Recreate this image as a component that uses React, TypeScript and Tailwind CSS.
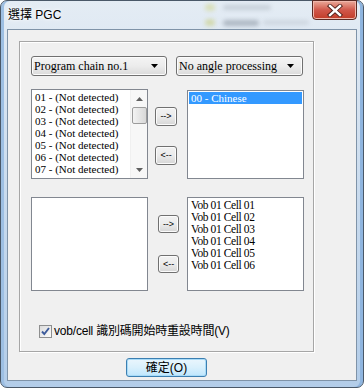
import React from "react";

const serif = "font-['Liberation_Serif','Noto_Sans_CJK_TC',serif]";
const sans = "font-['Liberation_Sans','Noto_Sans_CJK_TC',sans-serif]";

const chains = Array.from({ length: 8 }, (_, i) => `0${i + 1} - (Not detected)`);
const cells = Array.from({ length: 6 }, (_, i) => `Vob 01 Cell 0${i + 1}`);

function Combo({ label, width }: { label: string; width: string }) {
  return (
    <div
      className={`${width} h-[20px] flex items-center justify-between rounded-[3px] border border-[#707070] bg-gradient-to-b from-[#f4f4f4] via-[#ececec] to-[#dadada] pl-[2px] pr-[8px] shadow-[inset_0_0_0_1px_#fcfcfc]`}
    >
      <span className={`${serif} text-[12px] leading-[14px] text-black`}>{label}</span>
      <svg width="7" height="4" viewBox="0 0 7 4">
        <path d="M0 0h7L3.5 4z" fill="#000" />
      </svg>
    </div>
  );
}

function SmallButton({ label, w, h }: { label: string; w: string; h: string }) {
  return (
    <div
      className={`${w} ${h} flex items-center justify-center rounded-[3px] border border-[#707070] bg-gradient-to-b from-[#f2f2f2] via-[#ebebeb] to-[#d6d6d6] shadow-[inset_0_0_0_1px_#fbfbfb] ${sans} text-[9px] leading-none text-black`}
    >
      {label}
    </div>
  );
}

function ArrowButtons({ w, h, top, gap }: { w: string; h: string; top: string; gap: string }) {
  return (
    <div className={`flex flex-col ${top} ${gap}`}>
      <SmallButton label="-->" w={w} h={h} />
      <SmallButton label="<--" w={w} h={h} />
    </div>
  );
}

function ScrollBar() {
  return (
    <div className="w-[17px] h-full flex flex-col items-center bg-[#f7f7f7] border-l border-[#f0f0f0]">
      <div className="h-[17px] w-full flex items-center justify-center">
        <svg width="7" height="4" viewBox="0 0 7 4">
          <path d="M0 4h7L3.5 0z" fill="#606060" />
        </svg>
      </div>
      <div className="w-[15px] h-[17px] rounded-[2px] border border-[#9c9c9c] bg-gradient-to-r from-[#f3f3f3] to-[#d8d8d8]" />
      <div className="flex-1" />
      <div className="h-[17px] w-full flex items-center justify-center">
        <svg width="7" height="4" viewBox="0 0 7 4">
          <path d="M0 0h7L3.5 4z" fill="#606060" />
        </svg>
      </div>
    </div>
  );
}

export default function App() {
  return (
    <div className="w-[364px] h-[388px] overflow-hidden bg-white">
      <div className="relative w-[364px] h-[388px] rounded-[7px] border border-[#4a5868] bg-gradient-to-b from-[#e4ecf4] via-[#c9dbee] to-[#b3cde9] shadow-[inset_3px_0_0_#9dbfe3,inset_-3px_0_0_#8fb5df]">
        {/* blurred desktop behind the glass */}
        <div className="absolute left-[204px] top-[3px] w-[10px] h-[7px] rounded-full bg-[#d4d99e] blur-[2px] opacity-70" />
        <div className="absolute left-[222px] top-[4px] w-[48px] h-[5px] rounded bg-[#b4bdc7] blur-[2px] opacity-60" />
        <div className="absolute left-[204px] top-[18px] w-[10px] h-[7px] rounded-full bg-[#ccd290] blur-[2px] opacity-70" />
        <div className="absolute left-[222px] top-[19px] w-[36px] h-[6px] rounded bg-[#8c96a2] blur-[2px] opacity-60" />
        <div className="absolute left-[262px] top-[19px] w-[46px] h-[5px] rounded bg-[#c2cad3] blur-[2px] opacity-60" />

        {/* title bar */}
        <div className="h-[28px] flex items-center pl-[7px]">
          <span className={`${sans} text-[12px] text-black [text-shadow:0_0_6px_#fff,0_0_3px_#fff]`}>選擇 PGC</span>
        </div>

        {/* close button */}
        <div className="absolute right-[6px] top-[-1px] w-[45px] h-[20px] rounded-b-[4px] border border-[#5b2a23] bg-gradient-to-b from-[#e9a99a] via-[#d0574a] to-[#c23b26] shadow-[inset_0_0_0_1px_#f0b8ac] flex items-center justify-center">
          <svg width="16" height="13" viewBox="0 0 16 13">
            <path d="M3 2l10 9M13 2L3 11" stroke="#4a1d17" strokeWidth="4.2" strokeLinecap="square" />
            <path d="M3 2l10 9M13 2L3 11" stroke="#fff" strokeWidth="2.4" strokeLinecap="square" />
          </svg>
        </div>

        {/* client area */}
        <div className="ml-[6px] w-[350px] h-[352px] border border-[#7f93a8] bg-[#f0f0f0] flex flex-col">
          {/* group box */}
          <div className="ml-[11px] mt-[11px] w-[295px] h-[311px] border border-[#a6a6a6] shadow-[1px_1px_0_#fff,inset_1px_1px_0_#fff] flex flex-col pl-[11px]">
            <div className="mt-[14px] flex gap-[9px]">
              <Combo label="Program chain no.1" width="w-[136px]" />
              <Combo label="No angle processing" width="w-[127px]" />
            </div>

            <div className="mt-[13px] flex">
              <div className="w-[117px] h-[90px] border border-[#828790] bg-white flex overflow-hidden">
                <div className="flex-1 pl-[3px] pt-[1px] overflow-hidden">
                  {chains.map((c) => (
                    <div key={c} className={`${serif} text-[11px] leading-[12px] h-[12px] whitespace-nowrap text-black`}>
                      {c}
                    </div>
                  ))}
                </div>
                <ScrollBar />
              </div>
              <div className="ml-[7px]">
                <ArrowButtons w="w-[22px]" h="h-[19px]" top="mt-[18px]" gap="gap-[20px]" />
              </div>
              <div className="ml-[10px] mt-[1px] w-[117px] h-[89px] border border-[#828790] bg-white p-[1px]">
                <div className={`h-[12px] bg-[#3399ff] pl-[2px] ${serif} text-[11px] leading-[12px] text-white whitespace-nowrap`}>
                  00 - Chinese
                </div>
              </div>
            </div>

            <div className="mt-[18px] flex">
              <div className="w-[117px] h-[94px] border border-[#828790] bg-white" />
              <div className="ml-[10px]">
                <ArrowButtons w="w-[21px]" h="h-[18px]" top="mt-[18px]" gap="gap-[22px]" />
              </div>
              <div className="ml-[8px] w-[117px] h-[94px] border border-[#828790] bg-white pl-[3px] pt-[1px]">
                {cells.map((c) => (
                  <div key={c} className={`${serif} text-[11.5px] leading-[12px] h-[12px] tracking-[-0.4px] whitespace-nowrap text-black`}>
                    {c}
                  </div>
                ))}
              </div>
            </div>

            <div className="mt-[33px] ml-[8px] flex items-center gap-[2px]">
              <div className="w-[13px] h-[13px] border border-[#8e8f8f] bg-gradient-to-br from-[#dcdcdc] to-[#fbfbfb] flex items-center justify-center">
                <svg width="9" height="9" viewBox="0 0 9 9">
                  <path d="M1 4.5l2.3 2.6L8 1" stroke="#3c5b9b" strokeWidth="1.9" fill="none" />
                </svg>
              </div>
              <span className={`${sans} text-[12px] leading-[14px] tracking-[-0.2px] text-black`}>vob/cell 識別碼開始時重設時間(V)</span>
            </div>
          </div>

          {/* OK button */}
          <div className="ml-[118px] mt-[6px] w-[81px] h-[19px] rounded-[3px] border border-[#3c7fb1] bg-gradient-to-b from-[#eaf6fd] via-[#d9f0fc] to-[#bee6fd] shadow-[inset_0_0_0_1px_#a8dbf8] flex items-center justify-center">
            <span className={`${sans} text-[12px] leading-none text-black`}>確定(O)</span>
          </div>
        </div>
      </div>
    </div>
  );
}
